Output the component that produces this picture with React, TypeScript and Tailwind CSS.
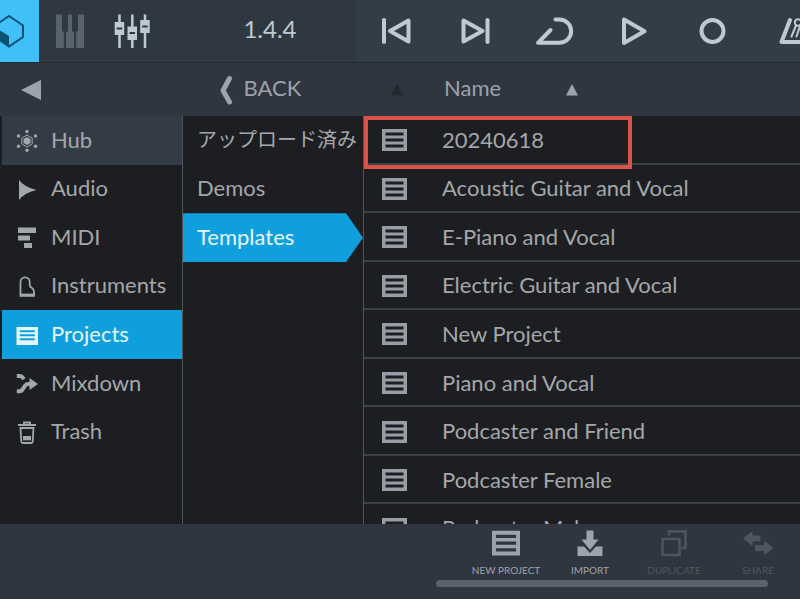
import type { ReactNode } from "react";
import clsx from "clsx";

const ListIcon = ({ className }: { className?: string }) => (
  <svg viewBox="0 0 25 24" className={className} fill="currentColor" aria-hidden="true">
    <path fillRule="evenodd" d="M0 2h25v22H0zM3.500 5.500v3h18v-3zm0 6v3h18v-3zm0 6v3h18v-3z" />
  </svg>
);

const SidebarListIcon = () => (
  <svg viewBox="0 0 24 24" className="w-6 h-6" aria-hidden="true">
    <path
      fill="currentColor"
      fillRule="evenodd"
      d="M1.500 4H23v18H1.500zM4.800 7.300v1.900h15V7.300zm0 4v1.900h15v-1.900zm0 4v1.900h15v-1.900z"
    />
  </svg>
);

const HubIcon = () => (
  <svg viewBox="0 0 24 24" className="w-6 h-6" fill="currentColor" aria-hidden="true">
    <path d="M12 7l5.200 3v6L12 19l-5.200-3v-6z" fill="none" stroke="currentColor" strokeWidth="1" />
    <path d="M12 9l3.500 2v4L12 17l-3.500-2v-4z" />
    <circle cx="12" cy="3.500" r="1.700" />
    <circle cx="12" cy="22.200" r="1.700" />
    <circle cx="3.500" cy="8" r="1.700" />
    <circle cx="20.500" cy="8" r="1.700" />
    <circle cx="3.500" cy="18.200" r="1.700" />
    <circle cx="20.500" cy="18.200" r="1.700" />
  </svg>
);

const AudioIcon = () => (
  <svg viewBox="0 0 24 24" className="w-6 h-6" fill="currentColor" aria-hidden="true">
    <path d="M4 3Q9 10 21.500 13Q9 16 4 23z" />
  </svg>
);

const MidiIcon = () => (
  <svg viewBox="0 0 24 24" className="w-6 h-6" fill="currentColor" aria-hidden="true">
    <path d="M3 2.500h18V8H3zM3 10.500h12v5H3zM9 18h8v5H9z" />
  </svg>
);

const InstrumentIcon = () => (
  <svg viewBox="0 0 24 24" className="w-6 h-6" fill="none" stroke="currentColor" aria-hidden="true">
    <path
      d="M5.500 21V8a4.600 4.600 0 0 1 9.200 0c0 2.500-.4 3.600.6 4.700s3.700 1.600 3.700 5V21"
      strokeWidth="1.800"
    />
    <path d="M4.600 21.200h15.300" strokeWidth="3.200" />
  </svg>
);

const MixdownIcon = () => (
  <svg viewBox="0 0 24 24" className="w-6 h-6" aria-hidden="true">
    <path
      d="M1.800 5h3.500c1.500 0 2.400 1.500 3.500 3.300"
      fill="none"
      stroke="currentColor"
      strokeWidth="4"
    />
    <path
      d="M1.800 20.300h3c4 0 3.800-7.300 8.200-7.300h3.500"
      fill="none"
      stroke="currentColor"
      strokeWidth="4"
    />
    <path d="M14.500 7l8.500 6-8.500 6z" fill="currentColor" />
  </svg>
);

const TrashIcon = () => (
  <svg viewBox="0 0 24 24" className="w-6 h-6" aria-hidden="true">
    <path
      d="M9 4V2.500h6V4M3 5h18M5.500 8l.8 13.300q.1 1.700 1.700 1.700h8q1.600 0 1.700-1.700L18.500 8z"
      fill="none"
      stroke="currentColor"
      strokeWidth="1.800"
    />
    <path d="M8 16h8v4.300H8z" fill="currentColor" />
  </svg>
);

const PrevIcon = () => (
  <svg viewBox="0 0 40 32" className="w-10 h-8" fill="none" stroke="currentColor" strokeLinejoin="round" strokeLinecap="round" aria-hidden="true">
    <path d="M8 5v22" strokeWidth="4" />
    <path d="M32.500 5.500v21L14 16z" strokeWidth="4" />
  </svg>
);

const NextIcon = () => (
  <svg viewBox="0 0 40 32" className="w-10 h-8" fill="none" stroke="currentColor" strokeLinejoin="round" strokeLinecap="round" aria-hidden="true">
    <path d="M32.500 5v22" strokeWidth="4" />
    <path d="M8.500 5.500v21L27.500 16z" strokeWidth="4" />
  </svg>
);

const LoopIcon = () => (
  <svg viewBox="0 0 40 32" className="w-10 h-8" fill="none" stroke="currentColor" strokeLinejoin="round" strokeLinecap="round" strokeWidth="4" aria-hidden="true">
    <path d="M21.500 4.500H25.500a11.500 11.500 0 0 1 0 23.300H4L16.500 15" />
  </svg>
);

const PlayIcon = () => (
  <svg viewBox="0 0 40 32" className="w-10 h-8" fill="none" stroke="currentColor" strokeLinejoin="round" strokeWidth="4" aria-hidden="true">
    <path d="M11 4.500v23.500L31.500 16.200z" />
  </svg>
);

const RecordIcon = () => (
  <svg viewBox="0 0 40 32" className="w-10 h-8" fill="none" stroke="currentColor" strokeWidth="4" aria-hidden="true">
    <circle cx="20.500" cy="16" r="11" />
  </svg>
);

const MetronomeIcon = () => (
  <svg viewBox="0 0 40 32" className="w-10 h-8" fill="none" stroke="currentColor" strokeLinejoin="round" strokeLinecap="round" aria-hidden="true">
    <path d="M19 5L10.500 27H34" strokeWidth="4" />
    <circle cx="27" cy="7.500" r="3.200" strokeWidth="2" />
    <path d="M25 10.500L20.500 21.500" strokeWidth="2" />
    <path d="M29 11l-3.500 10.500" strokeWidth="2" />
  </svg>
);

const transport = [
  { label: "Previous", icon: PrevIcon },
  { label: "Next", icon: NextIcon },
  { label: "Loop", icon: LoopIcon },
  { label: "Play", icon: PlayIcon },
  { label: "Record", icon: RecordIcon },
  { label: "Metronome", icon: MetronomeIcon },
];

const categories = [
  { label: "Hub", icon: HubIcon },
  { label: "Audio", icon: AudioIcon },
  { label: "MIDI", icon: MidiIcon },
  { label: "Instruments", icon: InstrumentIcon },
  { label: "Projects", icon: SidebarListIcon },
  { label: "Mixdown", icon: MixdownIcon },
  { label: "Trash", icon: TrashIcon },
];

const folders = ["アップロード済み", "Demos", "Templates"];

const projects = [
  "20240618",
  "Acoustic Guitar and Vocal",
  "E-Piano and Vocal",
  "Electric Guitar and Vocal",
  "New Project",
  "Piano and Vocal",
  "Podcaster and Friend",
  "Podcaster Female",
  "Podcaster Male",
];

function TopBar() {
  return (
    <header className="h-[62px] shrink-0 flex overflow-hidden bg-[#2f3840] text-[#bccad5]">
      <button aria-label="Projects" className="w-[39px] shrink-0 bg-[#40c0f6] text-[#0a5274] flex items-center">
        <svg viewBox="0 0 39 62" className="w-[39px] h-[62px]" aria-hidden="true">
          <path d="M9 16l14 9.500v11.500L9 46.500-5 37V25.500z" fill="none" stroke="currentColor" strokeWidth="2" />
          <path d="M-5 27.500L9 36v10.500L-5 37z" fill="currentColor" />
        </svg>
      </button>
      <button aria-label="Keys" className="ml-4 shrink-0 text-[#59636c]">
        <svg viewBox="0 0 30 34" className="w-[30px] h-[34px]" fill="currentColor" aria-hidden="true">
          <path d="M1 .5h6v17h1.800V34H1zM13 .5h4v17h2V34h-8V17.500h2zM23 .5h6V34h-7.800V17.500H23z" />
        </svg>
      </button>
      <button aria-label="Mixer" className="ml-7 shrink-0">
        <svg viewBox="0 0 38 34" className="w-[38px] h-[34px]" aria-hidden="true">
          <path d="M6.500 .5V34M19.300 .5V34M32 .5V34" stroke="currentColor" strokeWidth="2.500" />
          <path d="M1.700 8h9.500v13H1.700zM14.500 12.500H24V26h-9.500zM27.200 6h9.500v13h-9.500z" fill="currentColor" />
          <path d="M3.700 14.500h5.500M16.500 19H22M29.200 12.500h5.500" stroke="#2f3840" strokeWidth="2" />
        </svg>
      </button>
      <div className="flex-1 flex items-center justify-center text-2xl pl-[33px] pb-1 min-w-0">1.4.4</div>
      <div className="w-[444px] shrink-0 flex bg-[#333d46]">
        {transport.map(({ label, icon: Icon }) => (
          <button key={label} aria-label={label} className="w-[79px] shrink-0 flex items-center justify-center">
            <Icon />
          </button>
        ))}
      </div>
    </header>
  );
}

function BrowserHeader() {
  return (
    <div className="h-[54px] shrink-0 flex items-center bg-[#30363f] border-t border-[#202a32] text-[#9da2ab] text-[22px]">
      <div className="w-[183px] pl-5">
        <button aria-label="Collapse" className="block">
          <svg viewBox="0 0 22 22" className="w-[22px] h-[22px]" fill="currentColor" aria-hidden="true">
            <path d="M21 1v20L1 11z" />
          </svg>
        </button>
      </div>
      <div className="w-[181px] flex justify-center pr-7">
        <button className="flex items-center gap-[10px]">
          <svg viewBox="0 0 16 32" className="w-4 h-8" fill="none" stroke="currentColor" strokeWidth="5" strokeLinecap="round" strokeLinejoin="round" aria-hidden="true">
            <path d="M11.500 4.500L5 16.500l6.500 11.500" />
          </svg>
          <span className="pb-1">BACK</span>
        </button>
      </div>
      <div className="flex-1 flex items-center pl-[26px]">
        <button aria-label="Sort by type" className="text-[#23282e]">
          <svg viewBox="0 0 14 12" className="w-[14px] h-3" fill="currentColor" aria-hidden="true">
            <path d="M7 0l6.500 11.500H.5z" />
          </svg>
        </button>
        <button className="ml-10 flex items-center gap-16">
          <span className="pb-1">Name</span>
          <svg viewBox="0 0 14 12" className="w-[14px] h-3" fill="currentColor" aria-hidden="true">
            <path d="M7 0l6 11.500H1z" />
          </svg>
        </button>
      </div>
    </div>
  );
}

function FooterButton({ label, disabled, children }: { label: string; disabled?: boolean; children: ReactNode }) {
  return (
    <button
      disabled={disabled}
      className={clsx(
        "w-[84px] h-[54px] pt-1 flex flex-col items-center justify-between text-[10px] leading-4 whitespace-nowrap",
        disabled ? "text-[#4e555f]" : "text-[#9da2ab]"
      )}
    >
      {children}
      {label}
    </button>
  );
}

export default function App() {
  return (
    <div className="h-screen flex flex-col overflow-hidden bg-[#1d1e22] text-[#a4a7aa] font-[Lato,'Noto_Sans_CJK_JP',sans-serif] [font-variant-ligatures:none]">
      <TopBar />
      <BrowserHeader />

      <main className="flex-1 min-h-0 flex overflow-hidden">
        {/* Categories */}
        <nav className="w-[183px] shrink-0 pl-[2px] border-r border-[#50565c]">
          <ul className="h-[340px] grid grid-rows-7">
            {categories.map(({ label, icon: Icon }) => (
              <li key={label} className="flex">
                <button
                  className={clsx(
                    "flex-1 pl-[13px] flex items-center gap-3 text-[22px]",
                    label === "Hub" && "bg-[#333c45]",
                    label === "Projects" && "bg-[#109fdd] text-[#e4f7ff]"
                  )}
                >
                  <Icon />
                  <span className="pb-[2px]">{label}</span>
                </button>
              </li>
            ))}
          </ul>
        </nav>

        {/* Folders */}
        <nav className="w-[181px] shrink-0 border-r border-[#50565c]">
          <ul className="h-[146px] grid grid-rows-3">
            {folders.map((folder, i) => (
              <li key={folder} className="flex">
                <button
                  className={clsx(
                    "flex-1 pl-[14px] pb-[2px] text-left whitespace-nowrap",
                    i === 0 ? "text-xl" : "text-[22px]",
                    folder === "Templates" &&
                      "bg-[#109fdd] text-[#e4f7ff] [clip-path:polygon(0_0,calc(100%-17px)_0,100%_50%,calc(100%-17px)_100%,0_100%)]"
                  )}
                >
                  {folder}
                </button>
              </li>
            ))}
          </ul>
        </nav>

        {/* Files */}
        <section className="flex-1 min-w-0 relative">
          <ul className="h-[437px] grid grid-rows-9">
            {projects.map((project) => (
              <li key={project} className="flex border-b-2 border-[#3d4146]">
                <button className="flex-1 pl-[18px] flex items-center gap-[35px] text-[22px] whitespace-nowrap">
                  <ListIcon className="w-[25px] h-6 text-[#989ca5]" />
                  {project}
                </button>
              </li>
            ))}
          </ul>
          <div className="absolute top-0 left-0 w-[268px] h-[53px] border-4 border-[#d95448] pointer-events-none" />
        </section>
      </main>

      <footer className="h-[75px] shrink-0 relative flex justify-end bg-[#30363f]">
        <FooterButton label="NEW PROJECT">
          <ListIcon className="w-7 h-7" />
        </FooterButton>
        <FooterButton label="IMPORT">
          <svg viewBox="0 0 28 32" className="w-7 h-8" fill="currentColor" aria-hidden="true">
            <path d="M10.500 2.500h7v9h5L14 22 5.500 11.500h5z" />
            <path d="M1.500 18.500h6.500L14 25l6-6.500h6.500v9.500h-25z" />
          </svg>
        </FooterButton>
        <FooterButton label="DUPLICATE" disabled>
          <svg viewBox="0 0 28 32" className="w-7 h-8" fill="none" stroke="currentColor" strokeWidth="2.500" aria-hidden="true">
            <path d="M2.500 11h17v16h-17z" />
            <path d="M9 7.500v-4h16.500V20h-4" />
          </svg>
        </FooterButton>
        <FooterButton label="SHARE" disabled>
          <svg viewBox="0 0 32 32" className="w-8 h-8" fill="currentColor" aria-hidden="true">
            <path d="M10.500 3v4.500h8v6h-8V18L1 10.500z" />
            <path d="M22 12.500v4.500h-9v6h9v4.500l9.500-7.500z" />
          </svg>
        </FooterButton>
        <div className="absolute right-8 bottom-3 w-[332px] h-[7px] rounded-full bg-[#5b626b]" />
      </footer>
    </div>
  );
}
